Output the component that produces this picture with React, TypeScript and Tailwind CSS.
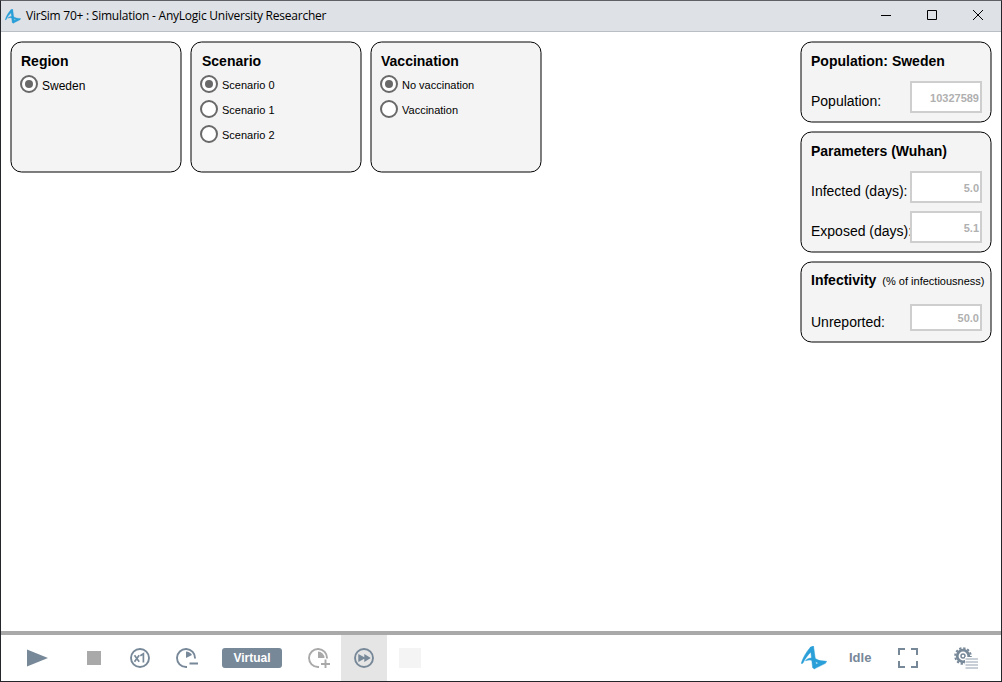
import type { ReactNode } from "react";

function Logo({ className }: { className: string }) {
  return (
    <svg className={className} viewBox="0 0 26 24" fill="#2a9fd8" stroke="#2a9fd8" strokeWidth="0.500" strokeLinejoin="round">
      <path d="M0.300 17.500C1.500 12.500 5.500 5.500 9.500 1.200L12.400 0.500L10.500 5.500C7 8.500 4 13 1.800 17.300Z" />
      <path d="M9.300 1.300L12.500 0.300L15.200 19L13.600 22.800L11.600 21.500Z" />
      <path d="M4.500 14.800C7.500 10.800 13.500 11 21 16.300L18.500 18C13 13.800 8.500 13.200 4.500 14.800Z" />
      <path d="M16 14.300L25.600 15.300L24.500 17.300L13.300 22.800L12 21.500L14.300 18.500L19.500 16.300Z" />
    </svg>
  );
}

function Panel({ className, children }: { className: string; children: ReactNode }) {
  return (
    <section
      className={`relative isolate before:absolute before:inset-0 before:-z-10 before:mr-px before:mb-px before:translate-[0.5px] before:rounded-[11px] before:border before:border-black before:bg-[#f4f4f4] ${className}`}
    >
      {children}
    </section>
  );
}

function Title({ children }: { children: ReactNode }) {
  return <h2 className="text-[14px] leading-4 font-bold whitespace-nowrap">{children}</h2>;
}

function Radio({ label, checked = false, large = false }: { label: string; checked?: boolean; large?: boolean }) {
  return (
    <label className="flex h-[25px] items-center gap-1">
      <svg className="h-[19px] w-[18px] shrink-0" viewBox="0 0 18 19">
        <circle cx="9" cy="9" r="8" fill="white" stroke="#696969" strokeWidth="2" />
        {checked && <circle cx="9" cy="9" r="4" fill="#696969" />}
      </svg>
      <span className={large ? "pt-[3px] text-[12px] leading-4" : "pt-px text-[11px] leading-4"}>{label}</span>
    </label>
  );
}

function Field({ label, value, small = false }: { label: string; value: string; small?: boolean }) {
  return (
    <div className="flex h-8 items-start justify-between">
      <span className="w-[99px] pt-3 text-[14px] leading-4 whitespace-nowrap">{label}</span>
      <span
        className={`flex w-[72px] shrink-0 items-center justify-end border-2 border-[#cecece] bg-white pt-0.5 pr-px text-[11px] font-bold text-[#b0b0b0] ${small ? "mt-0.5 h-[27px]" : "h-8"}`}
      >
        {value}
      </span>
    </div>
  );
}

export default function App() {
  return (
    <div className="flex h-[682px] w-[1002px] flex-col overflow-hidden border border-[#24262b] border-t-[#5e6065] bg-white font-['Liberation_Sans',Arial,sans-serif] text-black">
      <header className="flex h-[31px] shrink-0 items-center border-b border-[#b9bdc4] bg-[#dee1e6] pl-1">
        <Logo className="h-[15px] w-4" />
        <span className="ml-[5px] font-['Open_Sans','Noto_Sans',sans-serif] text-[12px] leading-4 tracking-[-0.235px] whitespace-nowrap">
          VirSim 70+ : Simulation - AnyLogic University Researcher
        </span>
        <div className="ml-auto flex h-full">
          {["M5 5.500H15", "M5.500 .500H14.500V9.500H5.500Z", "M5 0L15 10M15 0L5 10"].map((d) => (
            <span key={d} className="flex w-[46px] items-center justify-center pb-0.5">
              <svg width="20" height="11" viewBox="0 0 20 11" fill="none" stroke="black">
                <path d={d} />
              </svg>
            </span>
          ))}
        </div>
      </header>

      <main className="flex flex-1 items-start justify-between pt-[9px] pr-[9px] pl-[9px]">
        <div className="flex gap-2">
          <Panel className="h-[132px] w-[172px] pt-3 pl-[11px]">
            <Title>Region</Title>
            <div className="-ml-px pt-[3px]">
              <Radio label="Sweden" checked large />
            </div>
          </Panel>
          <Panel className="h-[132px] w-[172px] pt-3 pl-2.5">
            <div className="pl-0.5"><Title>Scenario</Title></div>
            <div className="pt-[3px]">
              <Radio label="Scenario 0" checked />
              <Radio label="Scenario 1" />
              <Radio label="Scenario 2" />
            </div>
          </Panel>
          <Panel className="h-[132px] w-[172px] pt-3 pl-2.5">
            <div className="pl-px"><Title>Vaccination</Title></div>
            <div className="pt-[3px]">
              <Radio label="No vaccination" checked />
              <Radio label="Vaccination" />
            </div>
          </Panel>
        </div>

        <div className="flex w-[192px] flex-col gap-2">
          <Panel className="h-[82px] pt-3 pr-2.5 pl-[11px]">
            <Title>Population: Sweden</Title>
            <div className="pt-3"><Field label="Population:" value="10327589" /></div>
          </Panel>
          <Panel className="h-[122px] pt-3 pr-2.5 pl-[11px]">
            <Title>Parameters (Wuhan)</Title>
            <div className="flex flex-col gap-2 pt-3">
              <Field label="Infected (days):" value="5.0" />
              <Field label="Exposed (days):" value="5.1" />
            </div>
          </Panel>
          <Panel className="h-[82px] pt-[11px] pr-2.5 pl-[11px]">
            <div className="flex items-baseline gap-1.5">
              <Title>Infectivity</Title>
              <span className="text-[11px] leading-4 whitespace-nowrap">(% of infectiousness)</span>
            </div>
            <div className="pt-[13px]"><Field label="Unreported:" value="50.0" small /></div>
          </Panel>
        </div>
      </main>

      <footer className="flex h-[50px] shrink-0 items-center border-t-4 border-[#a9a9a9] text-[#778899]">
        <svg className="ml-[26px]" width="21" height="18" viewBox="0 0 21 18" fill="currentColor">
          <path d="M0 0.500L21 9L0 17.500Z" />
        </svg>
        <span className="ml-[39px] size-[14px] bg-[#a9a9a9]" />
        <svg className="ml-[29px]" width="20" height="20" viewBox="0 0 20 20" fill="none" stroke="currentColor" strokeWidth="1.900">
          <circle cx="10" cy="10" r="9" />
          <path d="M4.500 7.300L9.200 13.800M9.200 7.300L4.500 13.800M10.300 7.800L13.400 5.800V14.500" strokeWidth="1.700" />
        </svg>
        <svg className="ml-[26px]" width="22" height="20" viewBox="0 0 22 20" fill="none" stroke="currentColor" strokeWidth="1.900">
          <path d="M11 19H10A9 9 0 1 1 19 10.500M13.500 15.500H22" />
          <path d="M10 3.500Q14 3.800 16 7L10 10Z" fill="currentColor" stroke="none" />
        </svg>
        <span className="ml-6 flex h-5 w-[60px] items-center justify-center rounded-[3px] bg-[#778899] text-[12px] font-bold text-white">Virtual</span>
        <svg className="ml-[26px]" width="22" height="20" viewBox="0 0 22 20" fill="none" stroke="#a9a9a9" strokeWidth="1.900">
          <path d="M11 19H10A9 9 0 1 1 19 10.500M13 16H22M17.500 11.500V20" />
          <path d="M10 3.500A6.500 6.500 0 0 1 16.500 10H10Z" fill="#a9a9a9" stroke="none" />
        </svg>
        <span className="ml-[11px] flex h-full w-[46px] items-center justify-center bg-[#e5e5e5]">
          <svg width="20" height="20" viewBox="0 0 20 20" fill="none" stroke="currentColor" strokeWidth="1.900">
            <circle cx="10" cy="10" r="9" />
            <path d="M4.300 6L10.300 9.300V6L16.800 10L10.300 14V10.700L4.300 14Z" fill="currentColor" stroke="none" />
          </svg>
        </span>
        <span className="ml-3 h-5 w-[22px] bg-[#f4f4f4]" />
        <div className="ml-auto flex items-center">
          <Logo className="h-6 w-[26px]" />
          <span className="ml-[22px] w-6 text-[13px] font-bold">Idle</span>
          <svg className="ml-[25px]" width="20" height="20" viewBox="0 0 20 20" fill="none" stroke="currentColor" strokeWidth="2">
            <path d="M1 7V1H7M13 1H19V7M19 13V19H13M7 19H1V13" />
          </svg>
          <svg className="mr-[23px] ml-9" width="24" height="22" viewBox="0 0 24 22" fill="none" stroke="currentColor">
            <circle cx="9" cy="9" r="5.800" strokeWidth="2.800" />
            <circle cx="9" cy="9" r="7.800" strokeWidth="2" strokeDasharray="2.300 1.784" />
            <circle cx="9" cy="9" r="2" strokeWidth="1.500" />
            <path d="M11 10H24V22H11Z" fill="white" stroke="none" />
            <path d="M11.500 12H24M11.500 15H24M11.500 18H24M11.500 21H24" stroke="#b7c0c9" strokeWidth="1.700" />
          </svg>
        </div>
      </footer>
    </div>
  );
}
